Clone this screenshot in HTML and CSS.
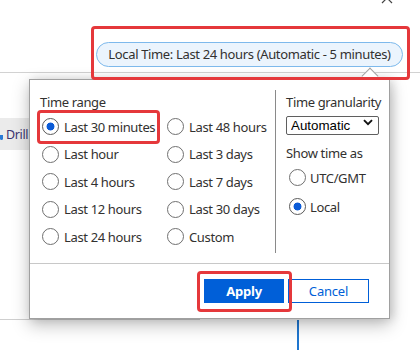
FILE: index.html
```html
<!DOCTYPE html>
<html>
<head>
<meta charset="utf-8">
<link rel="stylesheet" href="styles.css">
</head>
<body>
<div class="page">
  <header class="header">
    <svg class="close" width="12" height="12" viewBox="0 0 12 12"><path d="M1 1 L11 11 M11 1 L1 11" stroke="#444" stroke-width="1.2" fill="none"/></svg>
    <div class="mark mark-pill">
      <div class="pill">Local Time: Last 24 hours (Automatic - 5 minutes)</div>
    </div>
  </header>
  <div class="band"><span class="band-icon"></span><span class="band-text">Drill</span></div>
  <div class="lower"><div class="chart-line"></div></div>

  <div class="popup">
    <div class="caret"></div>
    <div class="popup-body">
      <section class="range">
        <div class="label">Time range</div>
        <div class="range-grid">
          <label class="opt mark-opt"><input type="radio" name="r" checked><span>Last 30 minutes</span></label>
          <label class="opt"><input type="radio" name="r"><span>Last 48 hours</span></label>
          <label class="opt"><input type="radio" name="r"><span>Last hour</span></label>
          <label class="opt"><input type="radio" name="r"><span>Last 3 days</span></label>
          <label class="opt"><input type="radio" name="r"><span>Last 4 hours</span></label>
          <label class="opt"><input type="radio" name="r"><span>Last 7 days</span></label>
          <label class="opt"><input type="radio" name="r"><span>Last 12 hours</span></label>
          <label class="opt"><input type="radio" name="r"><span>Last 30 days</span></label>
          <label class="opt"><input type="radio" name="r"><span>Last 24 hours</span></label>
          <label class="opt"><input type="radio" name="r"><span>Custom</span></label>
        </div>
      </section>
      <div class="divider"></div>
      <section class="side">
        <div class="label">Time granularity</div>
        <div class="select-wrap">
          <select class="select"><option>Automatic</option></select>
          <svg class="chev" width="10" height="7" viewBox="0 0 10 7"><path d="M1 1.2 L5 5.2 L9 1.2" stroke="#111" stroke-width="1.9" fill="none"/></svg>
        </div>
        <div class="label label-show">Show time as</div>
        <div class="show-list">
          <label class="opt opt-side"><input type="radio" name="t"><span>UTC/GMT</span></label>
          <label class="opt opt-side"><input type="radio" name="t" checked><span>Local</span></label>
        </div>
      </section>
    </div>
    <div class="popup-foot">
      <div class="mark mark-btn"><button class="btn btn-primary">Apply</button></div>
      <button class="btn btn-secondary">Cancel</button>
    </div>
  </div>
</div>
</body>
</html>
```

FILE: styles.css
```css
* { box-sizing: border-box; }
html, body { margin: 0; padding: 0; }
body {
  width: 420px;
  height: 350px;
  overflow: hidden;
  background: #fff;
  font-family: "Noto Sans", "Open Sans", sans-serif;
  letter-spacing: -0.35px;
  color: #323130;
}
.page {
  position: relative;
  width: 420px;
  height: 350px;
}
.header {
  height: 73px;
  border-bottom: 1px solid #d2d2d2;
  display: flex;
  justify-content: flex-end;
  align-items: flex-start;
  padding: 26px 10px 0 0;
  position: relative;
}
.close {
  position: absolute;
  top: -8px;
  left: 381px;
}
.mark {
  border: 3px solid #e5383b;
  border-radius: 4px;
  position: relative;
  z-index: 3;
}
.mark-pill {
  padding: 13px 4px 10px 2px;
}
.pill {
  height: 25px;
  width: 307px;
  border: 1px solid #7db9ec;
  background: #ebf4fd;
  border-radius: 13px;
  font-size: 13px;
  line-height: 23px;
  text-align: center;
  white-space: nowrap;
  color: #323130;
}
.band {
  margin-top: 45px;
  height: 32px;
  width: 200px;
  background: #ebebeb;
  display: flex;
  align-items: center;
}
.band-icon {
  width: 3px;
  height: 5px;
  background: #2a7ad6;
  border-radius: 0 0 2px 2px;
  margin-top: 6px;
}
.band-text {
  margin-left: 3px;
  font-size: 12.5px;
  color: #3b3470;
}
.lower {
  margin-top: 169px;
  border-top: 1px solid #cfcfcf;
  width: 200px;
  height: 40px;
  position: relative;
}
.chart-line {
  width: 2px;
  height: 40px;
  background: #1f76cf;
  margin-left: 297px;
}

/* popup */
.popup {
  position: absolute;
  left: 29px;
  top: 79px;
  width: 361px;
  height: 240px;
  background: #fff;
  border: 1px solid #a0a0a0;
  box-shadow: 0 6px 16px rgba(0,0,0,0.25), 3px 0 9px rgba(0,0,0,0.12);
  z-index: 2;
  display: flex;
  flex-direction: column;
}
.caret {
  position: absolute;
  left: 334px;
  top: -10px;
  width: 12px;
  height: 12px;
  background: #fff;
  border-top: 1px solid #a0a0a0;
  border-left: 1px solid #a0a0a0;
  transform: rotate(45deg);
}
.popup-body {
  height: 183px;
  display: flex;
}
.range {
  width: 245px;
  padding: 13px 0 0 10px;
}
.label {
  font-size: 13px;
  line-height: 18px;
  white-space: nowrap;
}
.range-grid {
  margin-top: 2px;
  display: grid;
  grid-template-columns: 125px 1fr;
  grid-auto-rows: 27.5px;
}
.opt {
  display: flex;
  align-items: center;
  gap: 5px;
  font-size: 13px;
  white-space: nowrap;
  justify-self: start;
}
.opt input {
  appearance: none;
  -webkit-appearance: none;
  margin: 0 0 0 2px;
  width: 17px;
  height: 17px;
  border: 1px solid #707070;
  border-radius: 50%;
  background: #fff;
  flex: none;
}
.opt input:checked {
  border-color: #5a5a5a;
  background: radial-gradient(circle, #0b5bd7 0 3.6px, #fff 4.3px);
}
.mark-opt {
  box-sizing: content-box;
  height: 27.5px;
  margin: -3px -5px -3px -3px;
  padding-right: 2px;
  border: 3px solid #e5383b;
  border-radius: 4px;
}
.divider {
  width: 1px;
  background: #8a8a8a;
  margin: 10px 0;
}
.side {
  padding: 13px 0 0 10px;
}
.select-wrap {
  position: relative;
  margin-top: 2px;
  width: 93px;
  height: 19px;
}
.select {
  appearance: none;
  -webkit-appearance: none;
  width: 93px;
  height: 19px;
  border: 1px solid #5f5f5f;
  border-radius: 2px;
  background: #fff;
  font-family: "Liberation Sans", Arial, sans-serif;
  letter-spacing: 0;
  font-size: 13.33px;
  color: #000;
  padding: 0 0 0 4px;
  margin: 0;
}
.chev {
  position: absolute;
  right: 6px;
  top: 6px;
  pointer-events: none;
}
.label-show {
  margin-top: 12px;
}
.show-list {
  margin-top: 1px;
  display: flex;
  flex-direction: column;
}
.opt-side {
  height: 29px;
  gap: 4px;
}
.opt-side input {
  margin-left: 3px;
}
.popup-foot {
  flex: 1;
  border-top: 1px solid #c8c8c8;
  display: flex;
  justify-content: flex-end;
  align-items: flex-start;
  padding: 15px 20px 0 0;
}
.btn {
  height: 24px;
  width: 81px;
  font-family: "Noto Sans", "Open Sans", sans-serif;
  font-size: 13px;
  letter-spacing: -0.2px;
  border-radius: 0;
  padding: 0;
  margin: 0;
}
.btn-primary {
  width: 80px;
  background: #005fd8;
  color: #fff;
  border: 1px solid #005fd8;
  font-weight: 700;
  display: block;
}
.btn-secondary {
  background: #fff;
  color: #005fd8;
  border: 1px solid #005fd8;
  margin-left: 4px;
}
.mark-btn {
  margin: -8px -8px -9px -7px;
  padding: 5px 5px 6px 4px;
}
```
